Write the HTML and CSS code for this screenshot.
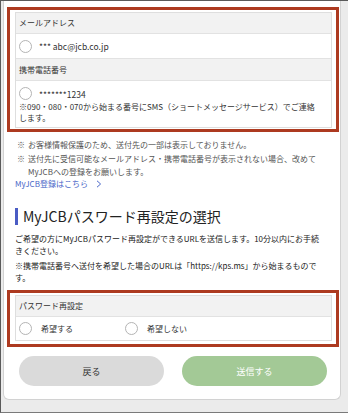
FILE: index.html
```html
<!DOCTYPE html>
<html lang="ja">
  <head>
    <meta charset="UTF-8" />
    <meta name="viewport" content="width=device-width, initial-scale=1.0" />
    <title>MyJCBパスワード再設定</title>
    <link rel="stylesheet" href="styles.css">
  </head>
  <body>
    <div class="frame">
      <div class="card">
        <div class="mark-box">
          <div class="table">
            <div class="head">メールアドレス</div>
            <div class="row">
              <span class="radio"></span>
              <span class="value">*** abc@jcb.co.jp</span>
            </div>
            <div class="head">携帯電話番号</div>
            <div class="row row-tall">
              <div class="line">
                <span class="radio"></span>
                <span class="value">*******1234</span>
              </div>
              <p class="sms">※090・080・070から始まる番号にSMS（ショートメッセージサービス）でご連絡<br>します。</p>
            </div>
          </div>
        </div>

        <div class="notes">
          <div class="note"><span class="kome">※</span><span>お客様情報保護のため、送付先の一部は表示しておりません。</span></div>
          <div class="note"><span class="kome">※</span><span>送付先に受信可能なメールアドレス・携帯電話番号が表示されない場合、改めて<br>MyJCBへの登録をお願いします。</span></div>
          <a class="link" href="#">MyJCB登録はこちら
            <svg width="6" height="8" viewBox="0 0 6 8"><path d="M1 0.8 L4.6 4 L1 7.2" fill="none" stroke="#4a67c8" stroke-width="1"/></svg>
          </a>
        </div>

        <h2 class="title">MyJCBパスワード再設定の選択</h2>
        <p class="desc">ご希望の方にMyJCBパスワード再設定ができるURLを送信します。10分以内にお手続<br>きください。</p>
        <p class="desc desc-2">※携帯電話番号へ送付を希望した場合のURLは「https://kps.ms」から始まるもので<br>す。</p>

        <div class="mark-box mark-box-2">
          <div class="table">
            <div class="head">パスワード再設定</div>
            <div class="row row-choice">
              <label class="option"><span class="radio"></span>希望する</label>
              <label class="option"><span class="radio"></span>希望しない</label>
            </div>
          </div>
        </div>

        <div class="buttons">
          <button class="btn btn-back">戻る</button>
          <button class="btn btn-send">送信する</button>
        </div>
      </div>
    </div>
  </body>
</html>
```

FILE: styles.css
```css
body {
  margin: 0;
  padding: 0;
  font-family: "Noto Sans CJK JP", "Noto Sans", sans-serif;
  color: #333;
}
.frame {
  width: 348px;
  height: 413px;
  box-sizing: border-box;
  border-left: 1px solid #5a5a5a;
  border-top: 1px solid #5a5a5a;
  border-bottom: 1px solid #7a7a7a;
  background: #ebebeb;
  overflow: hidden;
}
.card {
  width: 338px;
  margin-left: 2px;
  box-sizing: border-box;
  background: #fff;
  border: 1px solid #d2d2d2;
  border-top: none;
  border-radius: 0 0 6px 6px;
  padding: 6px 8px 13px 11px;
}
.mark-box {
  margin: 0 -7px 0 -8px;
  border: 3px solid #ad3a20;
  padding: 2px 4px 1px 5px;
}
.mark-box-2 {
  margin-top: 7px;
  padding-bottom: 3px;
}
.table {
  border: 1px solid #dedede;
}
.head {
  height: 21px;
  line-height: 21px;
  padding-left: 3px;
  background: #f2f2f2;
  font-size: 8px;
  color: #333;
  border-top: 1px solid #e2e2e2;
}
.head:first-child {
  height: 20px;
  line-height: 20px;
  border-top: none;
}
.row {
  height: 24px;
  display: flex;
  align-items: center;
  gap: 7px;
  padding-left: 3px;
  border-top: 1px solid #e2e2e2;
  font-size: 8px;
}
.row-tall {
  height: auto;
  display: block;
  padding: 6px 3px 4px;
}
.line {
  display: flex;
  align-items: center;
  gap: 7px;
}
.radio {
  width: 13px;
  height: 13px;
  box-sizing: border-box;
  border: 1px solid #b4b4b4;
  border-radius: 50%;
  background: #fff;
  flex-shrink: 0;
}
.value {
  font-size: 8.5px;
  color: #333;
}
.sms {
  margin: 2px 0 0;
  line-height: 10.5px;
  white-space: nowrap;
}
.row-choice {
  height: 23px;
  gap: 0;
}
.option {
  display: flex;
  align-items: center;
  gap: 9px;
  width: 106px;
}
.notes {
  margin-top: 7px;
  font-size: 8px;
  color: #555;
}
.note {
  display: flex;
  padding-left: 2px;
  line-height: 12.5px;
  white-space: nowrap;
}
.note + .note {
  margin-top: 1.5px;
}
.kome {
  width: 11px;
  flex-shrink: 0;
}
.link {
  display: flex;
  align-items: center;
  gap: 8px;
  line-height: 11px;
  color: #4a67c8;
  text-decoration: none;
}
.title {
  margin: 19px 0 0;
  border-left: 3px solid #4a5cc4;
  padding-left: 5px;
  height: 17px;
  line-height: 17px;
  font-size: 14px;
  font-weight: normal;
  color: #222;
}
.desc {
  margin: 8px 0 0;
  font-size: 8px;
  line-height: 11.5px;
  color: #222;
  white-space: nowrap;
}
.desc-2 {
  margin-top: 4px;
}
.buttons {
  margin-top: 9px;
  padding: 0 5px 0 4px;
  display: flex;
  justify-content: space-between;
}
.btn {
  width: 145px;
  height: 30px;
  border: none;
  border-radius: 15px;
  font-family: "Noto Sans CJK JP", sans-serif;
  font-size: 9px;
  cursor: pointer;
}
.btn-back {
  background: #dadada;
  color: #333;
}
.btn-send {
  background: #a3c996;
  color: #fff;
}
```
